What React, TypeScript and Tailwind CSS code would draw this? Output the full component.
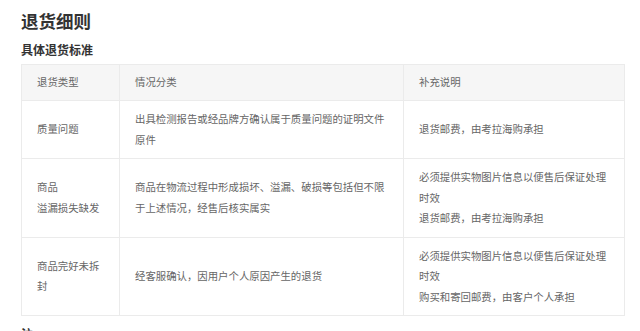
const rows = [
  {
    type: ['质量问题'],
    desc: ['出具检测报告或经品牌方确认属于质量问题的证明文件原件'],
    note: ['退货邮费，由考拉海购承担'],
  },
  {
    type: ['商品', '溢漏损失缺发'],
    desc: ['商品在物流过程中形成损坏、溢漏、破损等包括但不限于上述情况，经售后核实属实'],
    note: ['必须提供实物图片信息以便售后保证处理时效', '退货邮费，由考拉海购承担'],
  },
  {
    type: ['商品完好未拆封'],
    desc: ['经客服确认，因用户个人原因产生的退货'],
    note: ['必须提供实物图片信息以便售后保证处理时效', '购买和寄回邮费，由客户个人承担'],
  },
];

export default function App() {
  return (
    <div
      className="bg-white pl-[21px] pr-[16px] pt-[8px] h-[331px] overflow-hidden"
      style={{ fontFamily: '"Noto Sans CJK SC", "Noto Sans", sans-serif' }}
    >
      <h1 className="text-[17.5px] leading-[25px] font-bold text-[#333]">退货细则</h1>
      <h2 className="mt-[7px] text-[12px] leading-[20px] font-bold text-[#333]">具体退货标准</h2>

      <table className="mt-[4px] w-[603px] table-fixed border-collapse text-[10.4px] leading-[20.5px] text-[#666]">
        <colgroup>
          <col className="w-[98px]" />
          <col className="w-[284px]" />
          <col className="w-[221px]" />
        </colgroup>
        <thead>
          <tr className="bg-[#f6f6f6] h-[36px]">
            <th className="border border-[#ebebeb] px-[15px] text-left font-normal">退货类型</th>
            <th className="border border-[#ebebeb] px-[15px] text-left font-normal">情况分类</th>
            <th className="border border-[#ebebeb] px-[15px] text-left font-normal">补充说明</th>
          </tr>
        </thead>
        <tbody>
          {rows.map((row, i) => (
            <tr key={i}>
              {[row.type, row.desc, row.note].map((cell, j) => (
                <td key={j} className="border border-[#ebebeb] px-[15px] py-[8px] align-middle">
                  {cell.map((line, k) => (
                    <div key={k}>{line}</div>
                  ))}
                </td>
              ))}
            </tr>
          ))}
        </tbody>
      </table>

      <p className="mt-[8px] text-[12px] leading-[20px] font-bold text-[#333]">注</p>
    </div>
  );
}
